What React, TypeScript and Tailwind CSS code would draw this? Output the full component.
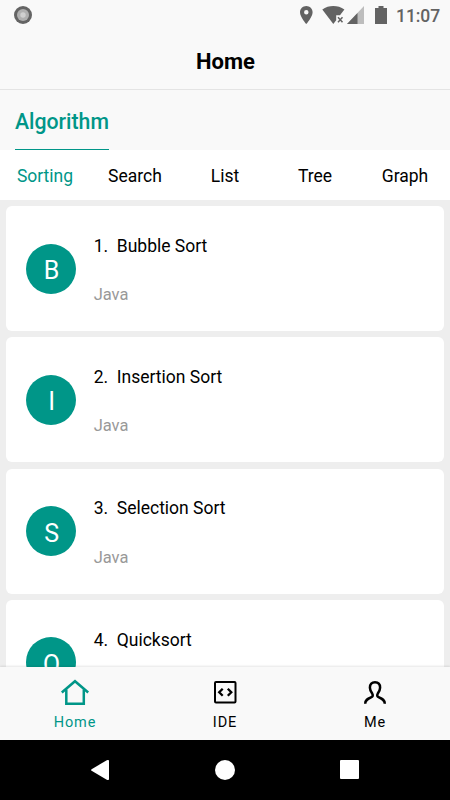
import React, { useState } from "react";

type Algorithm = {
	id: number;
	name: string;
	language: string;
};

const CATEGORIES = ["Sorting", "Search", "List", "Tree", "Graph"];

const ALGORITHMS: Algorithm[] = [
	{ id: 1, name: "Bubble Sort", language: "Java" },
	{ id: 2, name: "Insertion Sort", language: "Java" },
	{ id: 3, name: "Selection Sort", language: "Java" },
	{ id: 4, name: "Quicksort", language: "Java" },
];

const StatusBar: React.FC = () => (
	<div className="flex h-[30px] shrink-0 items-center justify-between pl-[14px] pr-[10px] text-[#636363]">
		<svg width="18" height="18" viewBox="0 0 18 18">
			<circle cx="9" cy="9" r="9" fill="#646464" />
			<circle cx="9" cy="9" r="6" fill="#b0b0b0" />
			<circle cx="9" cy="9" r="2.7" fill="#d0d0d0" />
		</svg>
		<div className="flex items-center">
			<svg width="96" height="20" viewBox="0 0 96 20" fill="currentColor">
				<path
					fillRule="evenodd"
					d="M6.3 1C2.8 1 0 3.8 0 7.2C0 12 6.3 19 6.3 19S12.6 12 12.6 7.2C12.6 3.8 9.8 1 6.3 1ZM6.3 5A2.25 2.25 0 1 1 6.3 9.5A2.25 2.25 0 1 1 6.3 5Z"
				/>
				<path d="M22.3 4.5C25.5 2 29.5 1 33.3 1C37.2 1 41.2 2 44.4 4.5L40 10.2H36.2V15.3L33.3 19Z" />
				<path
					d="M38 12.3L42.5 17.3M42.5 12.3L38 17.3"
					stroke="currentColor"
					strokeWidth="1.5"
				/>
				<path d="M64 1V19H47Z" fill="#bdbdbd" />
				<path d="M57.5 7.9V19H47Z" />
				<path d="M78.5 1H83.5V3H87V19H75V3H78.5Z" />
			</svg>
			<span className="mt-0.5 text-[17.5px] font-medium leading-5 tracking-[-0.1px]">
				11:07
			</span>
		</div>
	</div>
);

const AlgorithmCard: React.FC<{ item: Algorithm }> = ({ item }) => (
	<div className="flex h-[125px] shrink-0 items-center rounded-[6px] bg-white pl-[19.75px]">
		<div className="flex size-[50px] shrink-0 items-center justify-center rounded-full bg-[#009688] pl-px pt-1 text-[25px] leading-none text-white">
			{item.name[0]}
		</div>
		<div className="ml-[17.5px] flex flex-col gap-[25.3px] pt-[3.7px]">
			<div className="whitespace-pre text-[17.5px] leading-6 text-black">
				{`${item.id}.  ${item.name}`}
			</div>
			<div className="text-[16.5px] leading-6 text-[#999999]">
				{item.language}
			</div>
		</div>
	</div>
);

const HomeIcon = () => (
	<svg width="30" height="30" viewBox="0 0 30 30" fill="none" stroke="currentColor" strokeWidth="2.5">
		<path d="M1.8 15.5L15 4.2L28.2 15.5" />
		<path d="M6.3 12.5V26.7H23.8V12.5" />
	</svg>
);

const IdeIcon = () => (
	<svg width="30" height="30" viewBox="0 0 30 30" fill="none" stroke="currentColor" strokeWidth="2">
		<rect x="5" y="5" width="20.5" height="20.5" rx="1" />
		<path
			d="M12.7 11.7L9.2 15.2L12.7 18.7M17.8 11.7L21.3 15.2L17.8 18.7"
			strokeWidth="2.3"
		/>
	</svg>
);

const MeIcon = () => (
	<svg width="30" height="30" viewBox="0 0 30 30" fill="none" stroke="currentColor" strokeWidth="2.5">
		<path d="M5.2 26.7C5.2 23 7.5 21.8 11 20.3C13 19.4 13.2 18.5 12.2 16.5C10.5 14 9.9 12.3 9.9 10.7C9.9 7.2 11.8 5.3 15 5.3S20.1 7.2 20.1 10.7C20.1 12.3 19.5 14 17.8 16.5C16.8 18.5 17 19.4 19 20.3C22.5 21.8 24.8 23 24.8 26.7" />
	</svg>
);

const MENUS = [
	{ label: "Home", Icon: HomeIcon },
	{ label: "IDE", Icon: IdeIcon },
	{ label: "Me", Icon: MeIcon },
];

const SystemNav: React.FC = () => (
	<div className="grid h-[60px] shrink-0 grid-cols-[75px_100px_100px_100px] items-center bg-black text-white">
		<div />
		<svg className="ml-4" width="18" height="20" viewBox="0 0 18 20" fill="currentColor">
			<path d="M.6 9.2L15.8.2Q18 -.5 18 1V19Q18 20.5 15.8 19.8L.6 10.8Q-.5 10 .6 9.2Z" />
		</svg>
		<div className="ml-10 size-5 rounded-full bg-white" />
		<div className="mb-px ml-[65px] size-[19px] rounded-[1px] bg-white" />
	</div>
);

const App: React.FC = () => {
	const [category, setCategory] = useState("Sorting");
	const [menu, setMenu] = useState("Home");

	return (
		<div className="flex h-[800px] w-[450px] flex-col overflow-hidden bg-[#f9f9f9] font-[Roboto,sans-serif] text-black">
			<StatusBar />
			<header className="flex h-[60px] shrink-0 items-center justify-center border-b border-[#e4e4e4] pl-px pt-1">
				<h1 className="text-[22px] font-bold leading-7">Home</h1>
			</header>
			<div className="flex h-[60px] shrink-0 pl-[15px]">
				<div className="flex items-center border-b border-[#009688] pt-[5px] text-[21.25px] font-medium text-[#009688]">
					Algorithm
				</div>
			</div>
			<div className="grid h-[50px] shrink-0 grid-cols-5 bg-white pt-[3px]">
				{CATEGORIES.map((name) => (
					<button
						key={name}
						className={`text-[17.5px] ${
							name === category ? "text-[#009688]" : "text-black"
						}`}
						onClick={() => setCategory(name)}
					>
						{name}
					</button>
				))}
			</div>
			<div className="flex min-h-0 flex-1 flex-col gap-[6.25px] overflow-hidden bg-[#eeeeee] px-[6.4px] pt-[6.1px]">
				{ALGORITHMS.map((item) => (
					<AlgorithmCard key={item.id} item={item} />
				))}
			</div>
			<nav className="relative grid h-[73px] shrink-0 grid-cols-3 bg-[#f9f9f9] shadow-[0_-1px_2px_rgba(0,0,0,0.1)]">
				{MENUS.map(({ label, Icon }) => (
					<button
						key={label}
						className={`flex flex-col items-center pt-[10px] text-[14.5px] leading-5 tracking-[0.9px] ${
							label === menu ? "text-[#009688]" : "text-black"
						}`}
						onClick={() => setMenu(label)}
					>
						<Icon />
						<span className="mt-[6px]">{label}</span>
					</button>
				))}
			</nav>
			<SystemNav />
		</div>
	);
};

export default App;
